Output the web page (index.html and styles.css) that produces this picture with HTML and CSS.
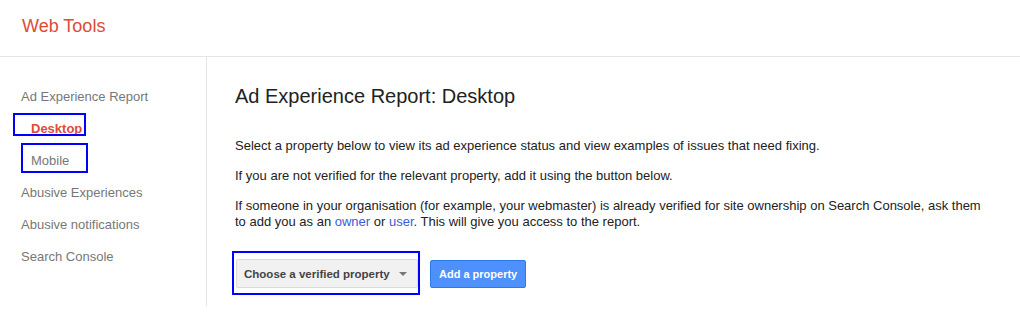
FILE: index.html
```html
<!DOCTYPE html>
<html lang="en">
  <head>
    <meta charset="UTF-8" />
    <title>Web Tools - Ad Experience Report</title>
    <link rel="stylesheet" href="styles.css">
  </head>
  <body>
    <div class="header">
      <div class="title">Web Tools</div>
    </div>

    <div class="layout">
      <div class="sidebar">
        <a href="#" class="nav-item">Ad Experience Report</a>
        <a href="#" class="nav-item sub active">Desktop<span class="mark mark-desktop"></span></a>
        <a href="#" class="nav-item sub">Mobile<span class="mark mark-mobile"></span></a>
        <a href="#" class="nav-item">Abusive Experiences</a>
        <a href="#" class="nav-item">Abusive notifications</a>
        <a href="#" class="nav-item">Search Console</a>
      </div>

      <div class="content">
        <h1 class="page-title">Ad Experience Report: Desktop</h1>
        <p>Select a property below to view its ad experience status and view examples of issues that need fixing.</p>
        <p>If you are not verified for the relevant property, add it using the button below.</p>
        <p>
          If someone in your organisation (for example, your webmaster) is already verified for site ownership on Search Console, ask them
          to add you as an <a href="#">owner</a> or <a href="#">user</a>. This will give you access to the report.
        </p>

        <div class="controls">
          <div class="select">
            <span>Choose a verified property</span>
            <span class="arrow"></span>
            <span class="mark mark-select"></span>
          </div>
          <button>Add a property</button>
        </div>
      </div>
    </div>
  </body>
</html>
```

FILE: styles.css
```css
body {
  font-family: "Liberation Sans", Arial, sans-serif;
  margin: 0;
  padding: 0;
  background-color: #fff;
  color: #222;
}

.header {
  height: 57px;
  box-sizing: border-box;
  padding: 14px 22px 0;
  border-bottom: 1px solid #e5e5e5;
}

.header .title {
  font-size: 18px;
  line-height: 24px;
  color: #dd4b39;
}

.layout {
  display: flex;
}

.sidebar {
  flex-shrink: 0;
  width: 207px;
  min-height: 248px;
  box-sizing: border-box;
  padding-top: 24px;
  border-right: 1px solid #e5e5e5;
  display: flex;
  flex-direction: column;
}

.nav-item {
  position: relative;
  display: block;
  height: 32px;
  line-height: 32px;
  padding-left: 21px;
  font-size: 13px;
  color: #777;
  text-decoration: none;
  white-space: nowrap;
}

.nav-item.sub {
  padding-left: 31px;
}

.nav-item.active {
  color: #dd4b39;
  font-weight: bold;
}

/* blue annotation boxes drawn over the page */
.mark {
  position: absolute;
  border: 2px solid #0000ff;
  box-sizing: border-box;
  pointer-events: none;
}

.mark-desktop {
  left: 13px;
  top: 0;
  width: 73px;
  height: 23px;
}

.mark-mobile {
  left: 21px;
  top: -2px;
  width: 67px;
  height: 30px;
}

.mark-select {
  left: -5px;
  top: -9px;
  right: -3px;
  bottom: -8px;
}

.content {
  flex-grow: 1;
  padding: 27px 36px 18px 28px;
}

.page-title {
  margin: 0 0 30px;
  font-size: 20px;
  line-height: 24px;
  font-weight: normal;
  color: #222;
}

.content p {
  margin: 0 0 14px;
  font-size: 13px;
  line-height: 16px;
}

.content p a {
  color: #3b5bd6;
  text-decoration: none;
}

.controls {
  display: flex;
  align-items: center;
  gap: 12px;
  margin-top: 29px;
}

.select {
  position: relative;
  width: 182px;
  height: 29px;
  margin-left: 1px;
  box-sizing: border-box;
  padding: 0 7px;
  display: flex;
  align-items: center;
  justify-content: space-between;
  background-color: #f1f1f1;
  border: 1px solid #dcdcdc;
  border-radius: 2px;
  font-size: 11.5px;
  font-weight: bold;
  color: #444;
}

.arrow {
  width: 0;
  height: 0;
  margin-right: 3px;
  border-left: 4px solid transparent;
  border-right: 4px solid transparent;
  border-top: 4px solid #777;
}

button {
  height: 28px;
  padding: 0 8px;
  background-color: #4d90fe;
  border: 1px solid #3079ed;
  border-radius: 2px;
  color: #fff;
  font-family: "Liberation Sans", Arial, sans-serif;
  font-size: 11px;
  font-weight: bold;
}
```
